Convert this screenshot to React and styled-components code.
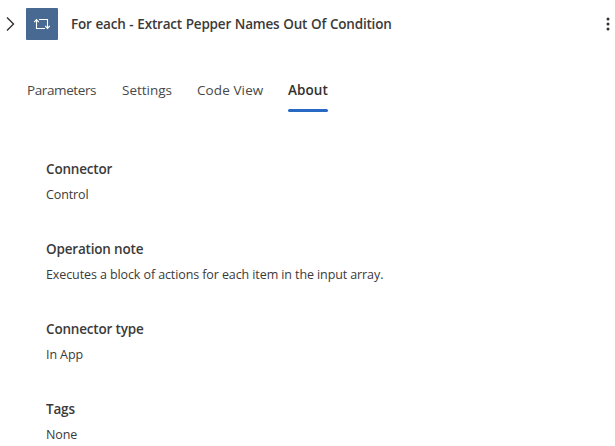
import React from "react";
import styled, { createGlobalStyle } from "styled-components";

const Global = createGlobalStyle`
  * { box-sizing: border-box; }
  body { margin: 0; background: #fff; font-family: "Open Sans", "Noto Sans", sans-serif; color: #323130; }
`;
const Panel = styled.main`
  width: 615px;
  height: 446px;
  overflow: hidden;
  background: #fff;
`;
const Header = styled.header`
  display: flex;
  align-items: center;
  height: 48px;
  padding: 0 3px 0 5px;
`;
const Chevron = styled.svg`
  width: 11px;
  height: 16px;
  margin-right: 10px;
`;
const IconTile = styled.svg`
  width: 32px;
  height: 32px;
  flex: none;
`;
const Title = styled.h1`
  margin: 0 auto 0 13px;
  font-size: 13.5px;
  font-weight: 600;
  line-height: 20px;
  letter-spacing: -0.2px;
  word-spacing: 0.5px;
  white-space: nowrap;
  color: #3b3a39;
`;
const MoreIcon = styled.svg`
  width: 9px;
  height: 16px;
`;
const Tabs = styled.nav`
  display: flex;
  padding: 20px 27px 0;
`;
const Tab = styled.button`
  position: relative;
  width: ${(p) => p.$width}px;
  height: 44px;
  margin-right: 25px;
  padding: 12px 0;
  border: 0;
  background: none;
  text-align: left;
  white-space: nowrap;
  font: ${(p) => (p.$active ? 600 : 400)} 13.5px/20px "Open Sans", "Noto Sans", sans-serif;
  letter-spacing: ${(p) => p.$tracking}px;
  color: ${(p) => (p.$active ? "#323130" : "#484848")};

  &::after {
    content: "";
    position: absolute;
    left: 0;
    right: 0;
    bottom: 0;
    height: 3px;
    border-radius: 2px;
    background: ${(p) => (p.$active ? "#2869c3" : "transparent")};
  }
`;
const Details = styled.dl`
  margin: 0;
  padding: 47px 46px 0;
`;
const Field = styled.div`
  height: 80px;
`;
const Label = styled.dt`
  font-size: 13.5px;
  font-weight: 600;
  line-height: 20px;
  letter-spacing: -0.18px;
  color: #3b3a39;
`;
const Value = styled.dd`
  margin: 7px 0 0;
  font-size: 12.5px;
  line-height: 18px;
  letter-spacing: -0.1px;
  color: #3b3a39;
`;

const tabs = [
  { name: "Parameters", width: 70, tracking: -0.4 },
  { name: "Settings", width: 50, tracking: -0.02 },
  { name: "Code View", width: 66, tracking: 0.1 },
  { name: "About", width: 40, tracking: 0.1, active: true },
];
const fields = [
  ["Connector", "Control"],
  ["Operation note", "Executes a block of actions for each item in the input array."],
  ["Connector type", "In App"],
  ["Tags", "None"],
];

export default function App() {
  return (
    <Panel>
      <Global />
      <Header>
        <Chevron viewBox="0 0 11 16" fill="none" stroke="#323130" strokeWidth="1.4">
          <path d="M2 1.5 8.5 8 2 14.5" />
        </Chevron>
        <IconTile viewBox="0 0 32 32">
          <rect width="32" height="32" rx="1" fill="#486991" />
          <g fill="none" stroke="#fff" strokeWidth="1.1">
            <path d="M10.5 12v8.5H19M13 11.5h8.5V20" />
            <path d="m8.2 14.2 2.3-2.6 2.3 2.6M19.2 17.8l2.3 2.6 2.3-2.6" />
          </g>
        </IconTile>
        <Title>For each - Extract Pepper Names Out Of Condition</Title>
        <MoreIcon viewBox="0 0 9 16" fill="#323130">
          <circle cx="5" cy="3" r="1.5" />
          <circle cx="5" cy="8" r="1.5" />
          <circle cx="5" cy="13" r="1.5" />
        </MoreIcon>
      </Header>
      <Tabs>
        {tabs.map((t) => (
          <Tab key={t.name} $active={t.active} $width={t.width} $tracking={t.tracking}>
            {t.name}
          </Tab>
        ))}
      </Tabs>
      <Details>
        {fields.map(([label, value]) => (
          <Field key={label}>
            <Label>{label}</Label>
            <Value>{value}</Value>
          </Field>
        ))}
      </Details>
    </Panel>
  );
}
